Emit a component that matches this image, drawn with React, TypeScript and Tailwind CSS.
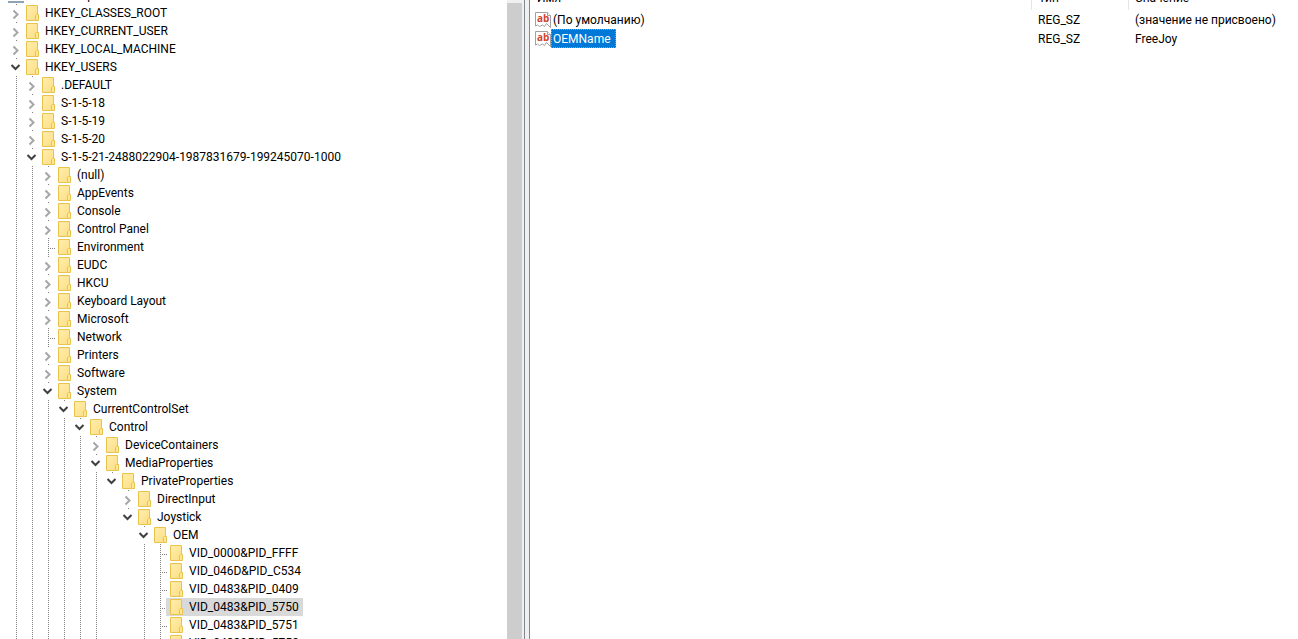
import React from 'react'

interface IKey {
  name: string
  open?: boolean
  leaf?: boolean
  last?: boolean
  selected?: boolean
  children?: IKey[]
}

interface IValue {
  name: string
  type: string
  data: string
  selected?: boolean
}

const registry: IKey[] = [
  { name: 'HKEY_CLASSES_ROOT' },
  { name: 'HKEY_CURRENT_USER' },
  { name: 'HKEY_LOCAL_MACHINE' },
  {
    name: 'HKEY_USERS',
    open: true,
    children: [
      { name: '.DEFAULT' },
      { name: 'S-1-5-18' },
      { name: 'S-1-5-19' },
      { name: 'S-1-5-20' },
      {
        name: 'S-1-5-21-2488022904-1987831679-199245070-1000',
        open: true,
        children: [
          { name: '(null)' },
          { name: 'AppEvents' },
          { name: 'Console' },
          { name: 'Control Panel' },
          { name: 'Environment', leaf: true },
          { name: 'EUDC' },
          { name: 'HKCU' },
          { name: 'Keyboard Layout' },
          { name: 'Microsoft' },
          { name: 'Network', leaf: true },
          { name: 'Printers' },
          { name: 'Software' },
          {
            name: 'System',
            open: true,
            children: [
              {
                name: 'CurrentControlSet',
                open: true,
                children: [
                  {
                    name: 'Control',
                    open: true,
                    children: [
                      { name: 'DeviceContainers' },
                      {
                        name: 'MediaProperties',
                        open: true,
                        children: [
                          {
                            name: 'PrivateProperties',
                            open: true,
                            last: true,
                            children: [
                              { name: 'DirectInput' },
                              {
                                name: 'Joystick',
                                open: true,
                                last: true,
                                children: [
                                  {
                                    name: 'OEM',
                                    open: true,
                                    children: [
                                      { name: 'VID_0000&PID_FFFF', leaf: true },
                                      { name: 'VID_046D&PID_C534', leaf: true },
                                      { name: 'VID_0483&PID_0409', leaf: true },
                                      { name: 'VID_0483&PID_5750', leaf: true, selected: true },
                                      { name: 'VID_0483&PID_5751', leaf: true },
                                      { name: 'VID_0483&PID_5752', leaf: true },
                                    ],
                                  },
                                ],
                              },
                            ],
                          },
                        ],
                      },
                    ],
                  },
                ],
              },
            ],
          },
        ],
      },
    ],
  },
]

const values: IValue[] = [
  { name: '(По умолчанию)', type: 'REG_SZ', data: '(значение не присвоено)' },
  { name: 'OEMName', type: 'REG_SZ', data: 'FreeJoy', selected: true },
]

const FolderIcon: React.FC = () => (
  <svg className="w-4 h-4 shrink-0"
    viewBox="0 0 16 16"
    aria-hidden="true"
  >
    <defs>
      <linearGradient id="folder"
        x1="0"
        y1="0"
        x2="1"
        y2="1"
      >
        <stop offset="0"
          stopColor="#ffedb0"
        />
        <stop offset="1"
          stopColor="#fddf82"
        />
      </linearGradient>
    </defs>
    <path d="M2.5 0.5h11v15h-11z"
      fill="url(#folder)"
      stroke="#e9c44c"
    />
    <path d="M11.5 15.5v-5l1-1h2v6z"
      fill="#ffe795"
      stroke="#e9c44c"
    />
  </svg>
)

const ComputerIcon: React.FC = () => (
  <svg className="w-4 h-4 shrink-0"
    viewBox="0 0 16 16"
    aria-hidden="true"
  >
    <path d="M1.5 1.5h13v9h-13z"
      fill="#4fb4e6"
      stroke="#5b6b78"
    />
    <path d="M0 14h16v2h-16z"
      fill="#8fa3b5"
    />
  </svg>
)

const StringIcon: React.FC = () => (
  <svg className="w-4 h-4 shrink-0"
    viewBox="0 0 16 16"
    aria-hidden="true"
  >
    <path d="M0.5 0.5h12l3 3v12l-4-4-2 3-2-1.5-3 1.5-2-1.5-2 1z"
      fill="#fff"
      stroke="#a0a0a0"
    />
    <path d="M12.5 0.5v3h3"
      fill="#fff"
      stroke="#a0a0a0"
    />
    <text x="2"
      y="10"
      className="font-['Open_Sans'] text-[10px] font-bold"
      fill="#d1452b"
    >
      ab
    </text>
  </svg>
)

const Guide: React.FC = () => (
  <span className="ml-2 h-full w-px bg-[repeating-linear-gradient(#808080_0_1px,transparent_1px_2px)]" />
)

const Expander: React.FC<{ item: IKey }> = ( { item } ) => {
  if ( item.leaf ) {
    return (
      <span className="flex w-4 h-full shrink-0">
        <Guide />
        <span className="mt-2.5 ml-px h-px w-1.5 bg-[repeating-linear-gradient(90deg,#808080_0_1px,transparent_1px_2px)]" />
      </span>
    )
  }
  return (
    <span className="flex flex-col w-4 h-full shrink-0">
      <span className="ml-2 h-px w-px shrink-0 bg-[#808080]" />
      <button type="button"
        className="flex w-4 flex-1 justify-center"
        aria-label={item.name}
        aria-expanded={!!item.open}
      >
        <svg className="w-4 h-4"
          viewBox="0 0 16 16"
          fill="none"
          strokeWidth="2"
        >
          {item.open
            ? <path d="M3.5 6l4 4 4-4"
              stroke="#404040"
            />
            : <path d="M5.5 5.5l4 4-4 4"
              stroke="#a6a6a6"
            />}
        </svg>
      </button>
    </span>
  )
}

// guides holds one flag per ancestor: true when its dotted line runs on below it
const TreeItem: React.FC<{ item: IKey; guides: boolean[] }> = ( { item, guides } ) => (
  <li role="treeitem"
    aria-selected={!!item.selected}
  >
    <div className="flex h-[18px] pl-2">
      {guides.map( ( visible, idx ) => (
        <span key={idx}
          className="flex w-4 h-full shrink-0"
        >
          {visible && <Guide />}
        </span>
      ) )}
      <Expander item={item} />
      <span className={`-ml-0.5 flex items-center pl-0.5 pr-1 ${item.selected ? 'bg-[#d9d9d9]' : ''}`}>
        <FolderIcon />
        <span className="pl-[5px] whitespace-nowrap">{item.name}</span>
      </span>
    </div>
    {item.children && (
      <ul role="group">
        {item.children.map( ( child ) => (
          <TreeItem key={child.name}
            item={child}
            guides={[ ...guides, !item.last ]}
          />
        ) )}
      </ul>
    )}
  </li>
)

const KeyTree: React.FC = () => (
  <nav aria-label="Разделы"
    className="flex-1 min-w-0 overflow-hidden"
  >
    <div className="-mt-3.5 flex h-[18px] items-center pl-2">
      <ComputerIcon />
      <span className="pl-[5px]">Компьютер</span>
    </div>
    <ul role="tree">
      {registry.map( ( item ) => (
        <TreeItem key={item.name}
          item={item}
          guides={[]}
        />
      ) )}
    </ul>
  </nav>
)

const ValueTable: React.FC = () => (
  <table className="-mt-3.5 w-full table-fixed text-left">
    <colgroup>
      <col />
      <col className="w-[97px]" />
      <col className="w-[170px]" />
    </colgroup>
    <thead>
      <tr className="h-6">
        <th className="border-r border-[#e5e5e5] p-0 pl-[7px] font-normal">Имя</th>
        <th className="border-r border-[#e5e5e5] p-0 pl-[7px] font-normal">Тип</th>
        <th className="p-0 pl-[7px] font-normal">Значение</th>
      </tr>
    </thead>
    <tbody>
      {values.map( ( value ) => (
        <tr key={value.name}
          className="h-[19px]"
        >
          <td className="p-0 pl-[5px]">
            <span className="flex items-center">
              <StringIcon />
              <span className={`border border-dotted pt-px pl-px pr-1 leading-4 ${value.selected ? 'border-[#ff8728] bg-[#0078d7] text-white' : 'border-transparent'}`}>
                {value.name}
              </span>
            </span>
          </td>
          <td className="p-0 pl-[7px]">{value.type}</td>
          <td className="p-0 pl-[7px] whitespace-nowrap">{value.data}</td>
        </tr>
      ) )}
    </tbody>
  </table>
)

const App: React.FC = () => {
  return (
    <div className="flex h-screen overflow-hidden bg-white font-['Roboto',sans-serif] text-[12px] leading-4 text-black">
      <div className="flex w-[524px] shrink-0">
        <KeyTree />
        <div className="w-[17px] bg-[#f0f0f0] pt-[3px] pr-0.5">
          <div className="h-full bg-[#cdcdcd]" />
        </div>
      </div>
      <div className="w-1.5 shrink-0 border-x border-[#828790] bg-[#f0f0f0]" />
      <main className="flex-1 min-w-0 overflow-hidden">
        <ValueTable />
      </main>
    </div>
  )
}

export default App
